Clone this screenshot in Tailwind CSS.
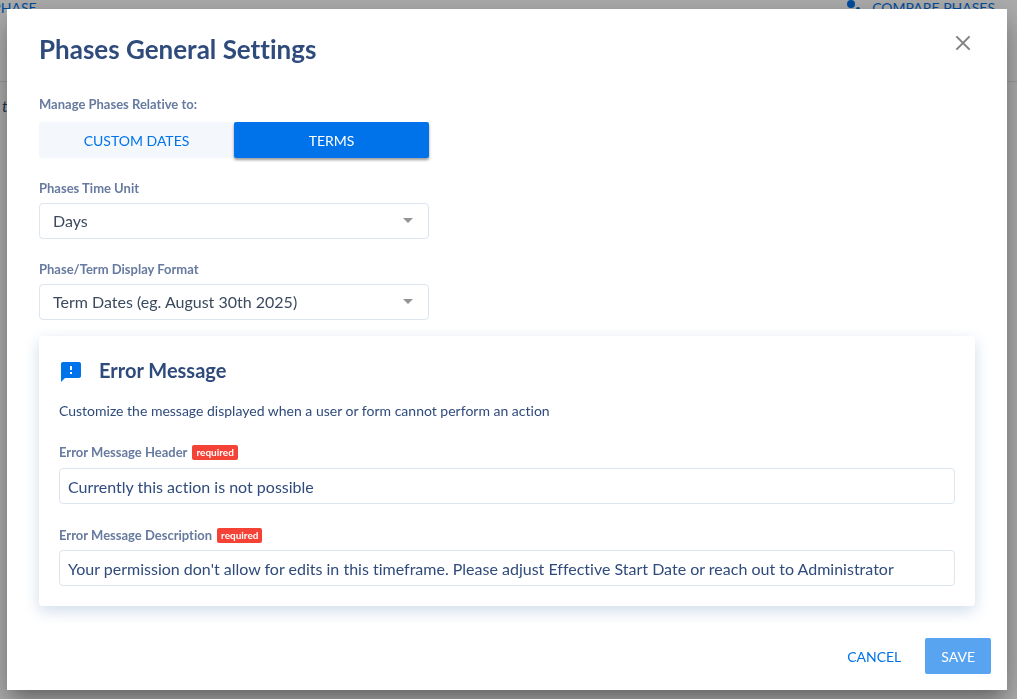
<!DOCTYPE html>
<html lang="en">

<head>
    <meta charset="UTF-8">
    <meta name="viewport" content="width=device-width, initial-scale=1.0">
    <title>Phases General Settings</title>
    <script src="https://cdn.jsdelivr.net/npm/@tailwindcss/browser@4"></script>
</head>

<body class="bg-white font-['Lato',sans-serif] text-[#2f4b7c] overflow-hidden [font-variant-ligatures:none]">

    <!-- Page behind the dialog -->
    <div class="h-screen overflow-hidden" aria-hidden="true">
        <div class="flex justify-between h-[82px] pr-[22px] border-b border-[#dde5ee] text-sm leading-4 text-[#0073ea]">
            <span class="-ml-[42px]">ADD PHASE</span>
            <span class="flex gap-[10px]">
                <svg class="w-4 h-4" viewBox="0 0 16 16" fill="currentColor">
                    <circle cx="5" cy="4" r="4" />
                    <circle cx="12" cy="9" r="2" />
                </svg>
                <span>COMPARE PHASES</span>
            </span>
        </div>
        <p class="px-0.5 pt-[14px] text-base leading-5 italic">t</p>
    </div>

    <!-- Dialog -->
    <div class="fixed inset-0 bg-black/32 flex items-center px-[7px] pr-[10px]">
        <div role="dialog" aria-labelledby="dialog-title"
            class="w-full bg-white pl-8 pr-4 pb-4 shadow-[0_11px_15px_-7px_rgba(0,0,0,0.2),0_12px_24px_rgba(0,0,0,0.22),0_9px_46px_8px_rgba(0,0,0,0.12)]">

            <header class="flex justify-between items-start pt-6 pr-4">
                <h1 id="dialog-title" class="text-[26px] leading-8 font-bold">Phases General Settings</h1>
                <button type="button" aria-label="Close" class="w-6 h-5 text-[#808080]">
                    <svg class="w-6 h-5" viewBox="0 0 24 20" fill="none" stroke="currentColor" stroke-width="2">
                        <path d="M5.4 3.4l13.2 13.2M18.6 3.4L5.4 16.6" />
                    </svg>
                </button>
            </header>

            <div class="pr-4">
                <fieldset class="mt-[31px] w-[390px] max-w-full">
                    <legend class="text-[13px] leading-4 font-bold text-[#677a9f]">Manage Phases Relative to:</legend>
                    <div class="mt-[10px] grid grid-cols-2 h-9 text-sm">
                        <button type="button" class="pt-px rounded-xs bg-[#f4f7fc] text-[#0073ea]">CUSTOM DATES</button>
                        <button type="button" class="pt-px rounded-xs bg-[#0073ea] text-white shadow-[0_2px_3px_rgba(0,0,0,0.4)]">TERMS</button>
                    </div>
                </fieldset>

                <div class="mt-[22px] w-[390px] max-w-full">
                    <label for="time-unit" class="block text-[13px] leading-4 font-bold text-[#677a9f]">Phases Time Unit</label>
                    <div class="relative mt-[7px]">
                        <select id="time-unit" class="w-full h-9 px-[13px] appearance-none rounded border border-[#dde5ee] bg-white text-base text-[#3b4a5e]">
                            <option>Days</option>
                        </select>
                        <svg class="absolute right-4 top-[15px] w-[10px] h-[5px] pointer-events-none" viewBox="0 0 10 5" fill="#949494"><path d="M0 0h10L5 5z" /></svg>
                    </div>
                </div>

                <div class="mt-[22px] w-[390px] max-w-full">
                    <label for="display-format" class="block text-[13px] leading-4 font-bold text-[#677a9f]">Phase/Term Display Format</label>
                    <div class="relative mt-[7px]">
                        <select id="display-format" class="w-full h-9 px-[13px] appearance-none rounded border border-[#dde5ee] bg-white text-base text-[#3b4a5e]">
                            <option>Term Dates (eg. August 30th 2025)</option>
                        </select>
                        <svg class="absolute right-4 top-[15px] w-[10px] h-[5px] pointer-events-none" viewBox="0 0 10 5" fill="#949494"><path d="M0 0h10L5 5z" /></svg>
                    </div>
                </div>

                <!-- Error message card -->
                <section class="mt-4 rounded p-5 shadow-[0_5px_16px_#d0dcea]">
                    <div class="flex items-end gap-4 h-7">
                        <svg class="w-6 h-6" viewBox="0 0 24 24" fill="#0073ea">
                            <path d="M20 2H4c-1.100 0-1.990.9-1.990 2L2 22l4-4h14c1.100 0 2-.9 2-2V4c0-1.100-.9-2-2-2zm-7 12h-2v-2h2v2zm0-4h-2V6h2v4z" />
                        </svg>
                        <h2 class="text-xl leading-7 font-bold">Error Message</h2>
                    </div>
                    <p class="mt-[17px] text-sm leading-5">Customize the message displayed when a user or form cannot perform an action</p>

                    <div class="mt-[23px]">
                        <label for="error-header" class="flex items-center gap-[5px] text-[13px] leading-4 font-bold text-[#677a9f]">
                            Error Message Header
                            <span class="px-1 rounded-xs bg-[#f44336] text-[10px] leading-[15px] text-white">required</span>
                        </label>
                        <input id="error-header" type="text" value="Currently this action is not possible"
                            class="mt-2 block w-full h-9 px-2 rounded border border-[#dde5ee] text-base">
                    </div>

                    <div class="mt-[23px]">
                        <label for="error-description" class="flex items-center gap-[5px] text-[13px] leading-4 font-bold text-[#677a9f]">
                            Error Message Description
                            <span class="px-1 rounded-xs bg-[#f44336] text-[10px] leading-[15px] text-white">required</span>
                        </label>
                        <input id="error-description" type="text"
                            value="Your permission don't allow for edits in this timeframe. Please adjust Effective Start Date or reach out to Administrator"
                            class="mt-[7px] block w-full h-9 px-2 rounded border border-[#dde5ee] text-base">
                    </div>
                </section>
            </div>

            <footer class="mt-8 flex justify-end gap-2 text-sm">
                <button type="button" class="h-9 px-4 pt-px text-[#0073ea]">CANCEL</button>
                <button type="button" class="h-9 px-4 pt-px rounded-xs bg-[#59a4f1] text-white">SAVE</button>
            </footer>
        </div>
    </div>

</body>

</html>
